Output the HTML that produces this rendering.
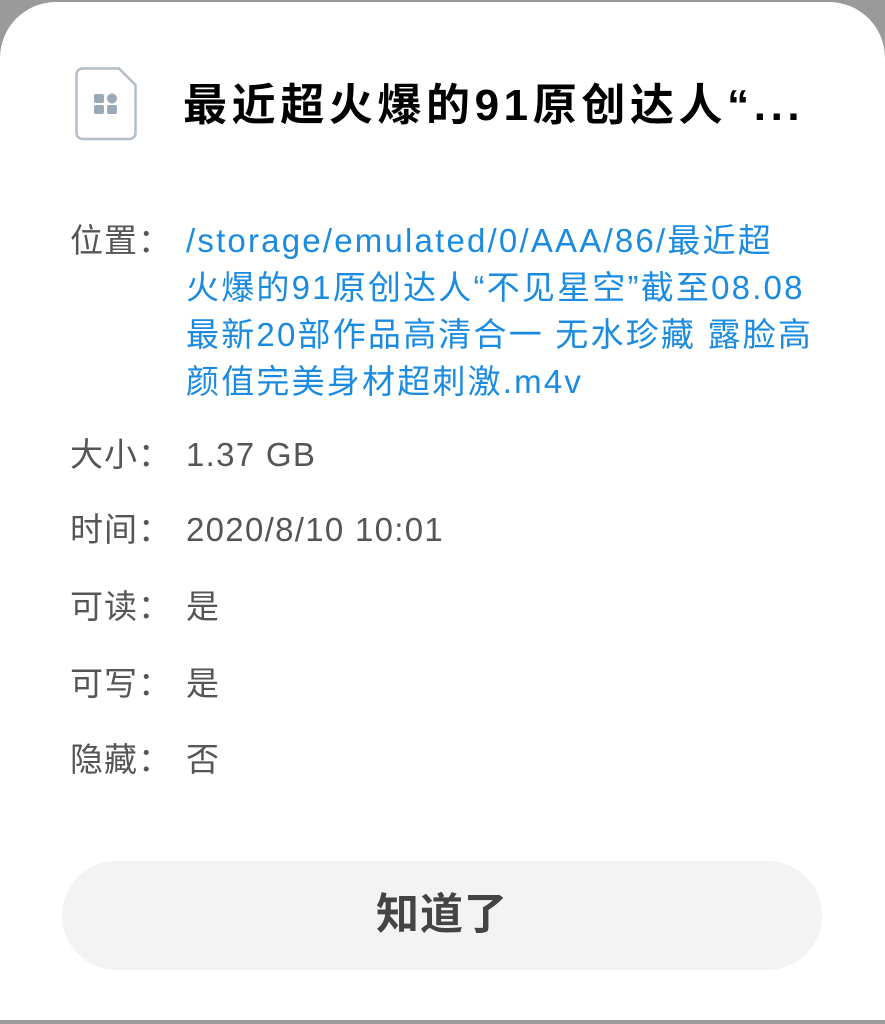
<!DOCTYPE html>
<html><head><meta charset="utf-8"><style>
html,body{margin:0;padding:0;width:885px;height:1024px;background:#9a9a9a;overflow:hidden;font-family:"Liberation Sans","Noto Sans CJK SC",sans-serif;}
.card{position:absolute;left:0;top:2px;width:885px;height:1018px;background:#fff;border-radius:56px 56px 0 0;}
.icon{position:absolute;left:75px;top:65px;}
.title{position:absolute;left:183px;top:76px;font-size:44px;line-height:56px;font-weight:bold;color:#000;white-space:nowrap;letter-spacing:4.6px;}
.row{position:absolute;left:70px;font-size:33px;color:#555;line-height:47px;}
.row .l{position:absolute;left:0;top:0;white-space:nowrap;letter-spacing:1px;}
.row .v{position:absolute;left:116px;top:0;white-space:nowrap;letter-spacing:1.3px;}
.blue{color:#1a8be0;letter-spacing:2.2px !important;}
.btn{position:absolute;left:62px;top:859px;width:760px;height:109px;border-radius:55px;background:#f3f3f3;text-align:center;line-height:109px;font-size:43px;color:#444;font-weight:bold;letter-spacing:1px;}
</style></head><body>
<div class="card">
<svg class="icon" width="62" height="74" viewBox="0 0 62 74"><path d="M6 1.5 H44 L60.5 18 V66 a6 6 0 0 1-6 6 H7.5 a6 6 0 0 1-6-6 V7.5 a6 6 0 0 1 6-6z" fill="none" stroke="#b4bec8" stroke-width="2.5"/><rect x="19" y="27" width="10" height="9" rx="2" fill="#9aaab8"/><circle cx="37" cy="31.5" r="5" fill="#9aaab8"/><rect x="19" y="38" width="10" height="9" rx="2" fill="#9aaab8"/><rect x="32" y="38" width="10" height="9" rx="2" fill="#9aaab8"/></svg>
<div class="title">最近超火爆的91原创达人“...</div>
<div class="row" style="top:215px"><span class="l">位置：</span><span class="v blue">/storage/emulated/0/AAA/86/最近超<br>火爆的91原创达人“不见星空”截至08.08<br>最新20部作品高清合一 无水珍藏 露脸高<br>颜值完美身材超刺激.m4v</span></div>
<div class="row" style="top:429px"><span class="l">大小：</span><span class="v">1.37 GB</span></div>
<div class="row" style="top:504px"><span class="l">时间：</span><span class="v">2020/8/10 10:01</span></div>
<div class="row" style="top:581px"><span class="l">可读：</span><span class="v">是</span></div>
<div class="row" style="top:658px"><span class="l">可写：</span><span class="v">是</span></div>
<div class="row" style="top:734px"><span class="l">隐藏：</span><span class="v">否</span></div>
<div class="btn">知道了</div>
</div>
</body></html>
